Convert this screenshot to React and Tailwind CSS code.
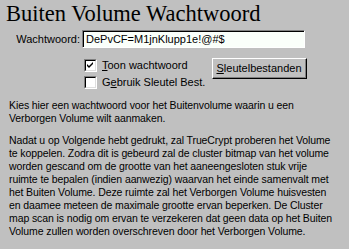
import React from "react";

const sunken =
  "border-t border-l border-t-[#808080] border-l-[#808080] border-b border-r border-b-white border-r-white";

const Check = ({ checked }) => (
  <span className={`w-[13px] h-[13px] ${sunken} bg-white flex items-center justify-center shrink-0`}>
    <span className="w-[11px] h-[11px] border-t border-l border-[#000] border-b-[#dfdfdf] border-r-[#dfdfdf] border-b border-r flex items-center justify-center">
      {checked && (
        <svg width="7" height="7" viewBox="0 0 7 7">
          <path d="M0 2 L2 4 L6 0 L6 2 L2 6 L0 4 Z" fill="#000" />
        </svg>
      )}
    </span>
  </span>
);

const App = () => {
  const lines1 = [
    "Kies hier een wachtwoord voor het Buitenvolume waarin u een",
    "Verborgen Volume wilt aanmaken.",
  ];
  const lines2 = [
    "Nadat u op Volgende hebt gedrukt, zal TrueCrypt proberen het Volume",
    "te koppelen. Zodra dit is gebeurd zal de cluster bitmap van het volume",
    "worden gescand om de grootte van het aaneengesloten stuk vrije",
    "ruimte te bepalen (indien aanwezig) waarvan het einde samenvalt met",
    "het Buiten Volume. Deze ruimte zal het Verborgen Volume huisvesten",
    "en daamee meteen de maximale grootte ervan beperken. De Cluster",
    "map scan is nodig om ervan te verzekeren dat geen data op het Buiten",
    "Volume zullen worden overschreven door het Verborgen Volume.",
  ];

  return (
    <div className="w-[349px] h-[249px] bg-[#c0c0c0] overflow-hidden text-black font-['Liberation_Sans',Arial,sans-serif] text-[11px] leading-[13px]">
      <div className="pl-[6px] pt-[1px] font-['Liberation_Serif','Times_New_Roman',serif] text-[22.5px] leading-[26px]">
        Buiten Volume Wachtwoord
      </div>
      <div className="flex items-center mt-[3px]">
        <div className="w-[82px] text-right pr-[2px]">Wachtwoord:</div>
        <div className={`w-[223px] h-[18px] bg-[#fafffa] ${sunken}`}>
          <div className="h-full border-t border-l border-black flex items-center pl-[2px]">
            DePvCF=M1jnKlupp1e!@#$
          </div>
        </div>
      </div>
      <div className="flex mt-[8px]">
        <div className="w-[84px]" />
        <div className="flex flex-col gap-[4px] pt-[3px]">
          <label className="flex items-center gap-[5px] h-[13px]">
            <Check checked />
            <span>
              <span className="underline">T</span>oon wachtwoord
            </span>
          </label>
          <label className="flex items-center gap-[5px] h-[13px]">
            <Check />
            <span>
              G<span className="underline">e</span>bruik Sleutel Best.
            </span>
          </label>
        </div>
        <div className="ml-auto mr-[42px] mt-[2px]">
          <button className="w-[95px] h-[21px] bg-[#c0c0c0] border-t border-l border-t-white border-l-white border-b border-r border-b-black border-r-black">
            <span className="block w-full h-full border-b border-r border-b-[#808080] border-r-[#808080] leading-[18px]">
              <span className="underline">S</span>leutelbestanden
            </span>
          </button>
        </div>
      </div>
      <div className="pl-[9px] mt-[10px] whitespace-nowrap text-[10.5px] tracking-[-0.1px]">
        {lines1.map((l, i) => (
          <div key={i}>{l}</div>
        ))}
      </div>
      <div className="pl-[9px] mt-[9px] whitespace-nowrap text-[10.5px] tracking-[-0.1px]">
        {lines2.map((l, i) => (
          <div key={i}>{l}</div>
        ))}
      </div>
    </div>
  );
};

export default App;
